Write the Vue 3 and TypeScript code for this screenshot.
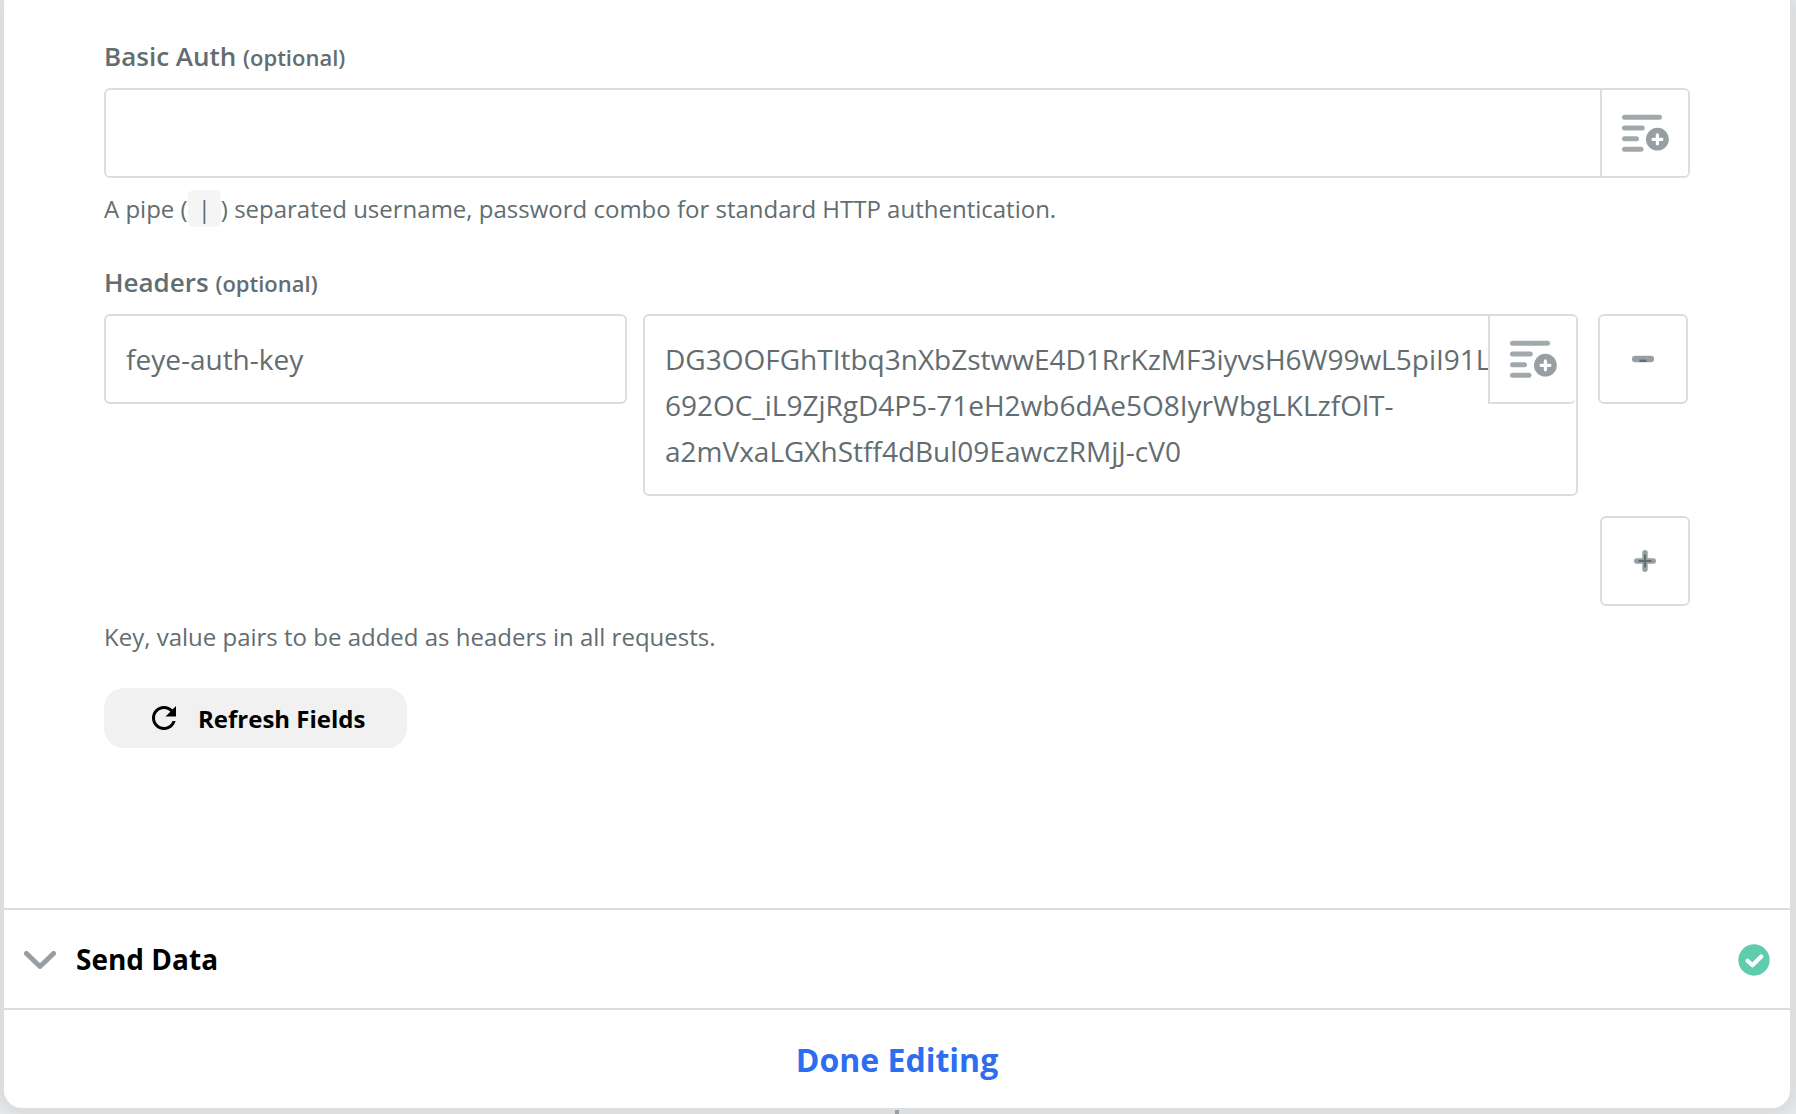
<script setup lang="ts">
import { h, ref } from 'vue'

const headerKey = ref('feye-auth-key')
const tokenLines = [
  'DG3OOFGhTItbq3nXbZstwwE4D1RrKzMF3iyvsH6W99wL5piI91L',
  '692OC_iL9ZjRgD4P5-71eH2wb6dAe5O8IyrWbgLKLzfOlT-',
  'a2mVxaLGXhStff4dBul09EawczRMjJ-cV0',
]

const InsertIcon = () =>
  h('svg', { width: 50, height: 44, viewBox: '0 0 50 44' }, [
    h('path', { d: 'M4.500 6.300h35M4.500 17h17.800M4.500 27.700h12M4.500 38.300h16.500', fill: 'none', stroke: '#a2a9ac', 'stroke-width': 5, 'stroke-linecap': 'round' }),
    h('circle', { cx: 37.4, cy: 28.2, r: 11.4, fill: '#979fa2' }),
    h('path', { d: 'M33 28.300h8.900M37.400 23.900v8.900', fill: 'none', stroke: '#fff', 'stroke-width': 3.2, 'stroke-linecap': 'round' }),
  ])
</script>

<template>
  <div class="page">
    <main class="card">
      <section class="form">
        <label class="label">Basic Auth <small>(optional)</small></label>
        <div class="field">
          <span class="grow"></span>
          <button class="insert"><InsertIcon /></button>
        </div>
        <p class="help">A pipe (<code>|</code>) separated username, password combo for standard HTTP authentication.</p>

        <label class="label second">Headers <small>(optional)</small></label>
        <div class="pair">
          <div class="field key"><span>{{ headerKey }}</span></div>
          <div class="token">
            <div class="lines"><div v-for="line in tokenLines" :key="line">{{ line }}</div></div>
            <button class="insert corner"><InsertIcon /></button>
          </div>
          <button class="square">
            <svg width="22" height="22" viewBox="0 0 22 22"><path d="M3.300 11h15.400" stroke="#979fa2" stroke-width="6.600" stroke-linecap="round" /><path d="M7.500 12.800h7" stroke="#626d71" stroke-width="2.400" /></svg>
          </button>
        </div>
        <div class="add">
          <button class="square">
            <svg width="22" height="22" viewBox="0 0 22 22"><path d="M2.700 11h16.600M11 2.700v16.600" stroke="#979fa2" stroke-width="5.400" stroke-linecap="round" /><path d="M4.500 11h13M11 4.500v13" stroke="#626d71" stroke-width="2" /></svg>
          </button>
        </div>
        <p class="help pairs-help">Key, value pairs to be added as headers in all requests.</p>
        <button class="refresh">
          <svg width="36" height="36" viewBox="0 0 24 24"><path d="M17.650 6.350C16.200 4.900 14.210 4 12 4c-4.420 0-7.990 3.580-7.990 8s3.570 8 7.990 8c3.730 0 6.840-2.550 7.730-6h-2.080c-.820 2.330-3.040 4-5.650 4-3.310 0-6-2.690-6-6s2.690-6 6-6c1.660 0 3.140.690 4.220 1.780L13 11h7V4l-2.350 2.350z" /></svg>
          <span>Refresh Fields</span>
        </button>
      </section>
      <section class="step">
        <svg class="chevron" width="32" height="19" viewBox="0 0 32 19"><path d="M2.500 2.500 16 15.500 29.500 2.500" fill="none" stroke="#979fa2" stroke-width="5" stroke-linecap="round" stroke-linejoin="round" /></svg>
        <h2>Send Data</h2>
        <svg class="done-mark" width="32" height="32" viewBox="0 0 32 32"><circle cx="16" cy="16" r="15.700" fill="#5fcdad" /><path d="M9.500 16.800 14.400 21.300 23.300 12.600" fill="none" stroke="#fff" stroke-width="4.200" stroke-linecap="round" stroke-linejoin="round" /></svg>
      </section>
      <button class="finish">Done Editing</button>
    </main>
    <div class="stem"></div>
  </div>
</template>

<style>
body { margin: 0; overflow: hidden; }
</style>

<style scoped>
* { box-sizing: border-box; }
.page { width: 1796px; height: 1114px; overflow: hidden; padding: 0 4px 0 2px; background: #e8e9ea; font-family: "Open Sans", sans-serif; color: #626d71; display: flex; flex-direction: column; align-items: center; }
button { font: inherit; color: inherit; padding: 0; margin: 0; background: none; border: 0; }
.card { width: 1790px; height: 1110px; flex: none; background: #fff; border: 2px solid #dbdfe2; border-top: 0; border-radius: 0 0 20px 20px; box-shadow: 0 0 20px rgba(0, 0, 0, .12); }
.form { height: 908px; padding: 38px 100px 0; display: flex; flex-direction: column; align-items: stretch; }
.label { height: 36px; line-height: 36px; font-size: 26px; font-weight: 600; margin-bottom: 14px; white-space: nowrap; }
.label small { font-size: 22px; }
.second { margin-top: 37px; }
.field { height: 90px; border: 2px solid #d9dee1; border-radius: 6px; display: flex; align-items: center; }
.grow { flex: 1; }
.insert { width: 88px; height: 86px; border-left: 2px solid #d9dee1; display: flex; align-items: center; justify-content: center; background: #fff; border-radius: 0 4px 4px 0; }
.help { margin: 13px 0 0; height: 36px; line-height: 36px; font-size: 24px; white-space: nowrap; }
.help code { font-family: inherit; background: #f5f5f5; padding: 2px 10px; border-radius: 6px; }
.pair { display: flex; align-items: flex-start; }
.key { width: 523px; padding-left: 20px; font-size: 28px; line-height: 46px; margin-right: 16px; }
.token { width: 935px; height: 182px; border: 2px solid #d9dee1; border-radius: 6px; padding: 20px; position: relative; font-size: 28px; line-height: 46px; margin-right: 20px; }
.lines { white-space: nowrap; }
.corner { position: absolute; top: 0; right: 0; height: 88px; border-bottom: 2px solid #d9dee1; border-radius: 0 4px 6px 0; }
.square { width: 90px; height: 90px; border: 2px solid #d9dee1; border-radius: 6px; display: flex; align-items: center; justify-content: center; }
.add { margin-top: 20px; display: flex; justify-content: flex-end; }
.refresh { align-self: flex-start; margin-top: 33px; width: 303px; height: 60px; border-radius: 20px; background: #f1f1f1; color: #000; font-size: 24px; font-weight: 700; display: flex; align-items: center; padding-left: 42px; gap: 16px; }
.step { height: 102px; border: 2px solid #d9dee1; border-width: 2px 0; display: flex; align-items: center; padding: 0 20px; }
.chevron, .done-mark { margin-top: 2px; }
.step h2 { margin: 0 auto 0 20px; font-size: 28px; line-height: 38px; color: #000; font-weight: 700; }
.finish { width: 100%; height: 98px; color: #2c6eef; font-size: 32px; font-weight: 700; display: block; }
.stem { width: 4px; height: 4px; background: #979fa2; }
</style>
